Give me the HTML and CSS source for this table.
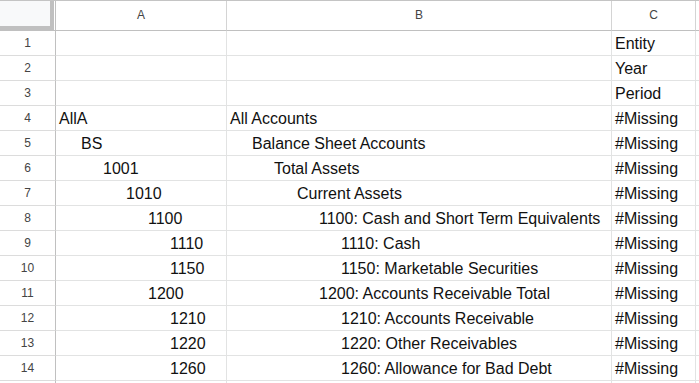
FILE: index.html
```html
<!DOCTYPE html>
<html lang="en">
<head>
    <meta charset="UTF-8">
    <title>Sheet</title>
    <link rel="stylesheet" href="styles.css">
</head>
<body>
    <div class="sheet">
        <div class="corner"><div class="corner-box"></div></div>
        <div class="col-head">A</div>
        <div class="col-head">B</div>
        <div class="col-head">C</div>
        <div class="col-head rest"></div>

        <div class="row-head">1</div><div class="cell"></div><div class="cell"></div><div class="cell">Entity</div><div class="cell rest"></div>
        <div class="row-head">2</div><div class="cell"></div><div class="cell"></div><div class="cell">Year</div><div class="cell rest"></div>
        <div class="row-head">3</div><div class="cell"></div><div class="cell"></div><div class="cell">Period</div><div class="cell rest"></div>
        <div class="row-head">4</div><div class="cell">AllA</div><div class="cell">All Accounts</div><div class="cell">#Missing</div><div class="cell rest"></div>
        <div class="row-head">5</div><div class="cell i1">BS</div><div class="cell i1">Balance Sheet Accounts</div><div class="cell">#Missing</div><div class="cell rest"></div>
        <div class="row-head">6</div><div class="cell i2">1001</div><div class="cell i2">Total Assets</div><div class="cell">#Missing</div><div class="cell rest"></div>
        <div class="row-head">7</div><div class="cell i3">1010</div><div class="cell i3">Current Assets</div><div class="cell">#Missing</div><div class="cell rest"></div>
        <div class="row-head">8</div><div class="cell i4">1100</div><div class="cell i4">1100: Cash and Short Term Equivalents</div><div class="cell">#Missing</div><div class="cell rest"></div>
        <div class="row-head">9</div><div class="cell i5">1110</div><div class="cell i5">1110: Cash</div><div class="cell">#Missing</div><div class="cell rest"></div>
        <div class="row-head">10</div><div class="cell i5">1150</div><div class="cell i5">1150: Marketable Securities</div><div class="cell">#Missing</div><div class="cell rest"></div>
        <div class="row-head">11</div><div class="cell i4">1200</div><div class="cell i4">1200: Accounts Receivable Total</div><div class="cell">#Missing</div><div class="cell rest"></div>
        <div class="row-head">12</div><div class="cell i5">1210</div><div class="cell i5">1210: Accounts Receivable</div><div class="cell">#Missing</div><div class="cell rest"></div>
        <div class="row-head">13</div><div class="cell i5">1220</div><div class="cell i5">1220: Other Receivables</div><div class="cell">#Missing</div><div class="cell rest"></div>
        <div class="row-head">14</div><div class="cell i5">1260</div><div class="cell i5">1260: Allowance for Bad Debt</div><div class="cell">#Missing</div><div class="cell rest"></div>
        <div class="row-head"></div><div class="cell"></div><div class="cell"></div><div class="cell"></div><div class="cell rest"></div>
    </div>
</body>
</html>
```

FILE: styles.css
```css
html, body {
    margin: 0;
    padding: 0;
    background-color: #fff;
    overflow: hidden;
}
body {
    font-family: "Liberation Sans", Arial, sans-serif;
    width: 699px;
    height: 383px;
}
.sheet {
    display: grid;
    grid-template-columns: 56px 171px 385px 84px 1fr;
    grid-template-rows: 30px;
    grid-auto-rows: 25px;
    border-top: 1px solid #c4c4c4;
}
.sheet > div {
    box-sizing: border-box;
    overflow: hidden;
    white-space: nowrap;
}
.corner {
    border-right: 1px solid #c0c0c0;
    border-bottom: 1px solid #c0c0c0;
}
.corner-box {
    width: 54px;
    height: 29px;
    box-sizing: border-box;
    background-color: #f8f9fa;
    border-right: 4px solid #c0c0c0;
    border-bottom: 4px solid #c0c0c0;
}
.col-head {
    font-size: 12px;
    color: #444;
    text-align: center;
    line-height: 29px;
    border-right: 1px solid #d4d4d4;
    border-bottom: 1px solid #c0c0c0;
}
.row-head {
    font-size: 12px;
    color: #444;
    text-align: center;
    line-height: 24px;
    border-right: 1px solid #c0c0c0;
    border-bottom: 1px solid #dcdcdc;
}
.cell {
    font-size: 16px;
    color: #111;
    line-height: 24px;
    padding-top: 1px;
    padding-left: 3px;
    border-right: 1px solid #e2e3e3;
    border-bottom: 1px solid #e2e3e3;
}
.rest {
    border-right: none;
}
.i1 { padding-left: 25px; }
.i2 { padding-left: 47px; }
.i3 { padding-left: 70px; }
.i4 { padding-left: 92px; }
.i5 { padding-left: 114px; }
```
